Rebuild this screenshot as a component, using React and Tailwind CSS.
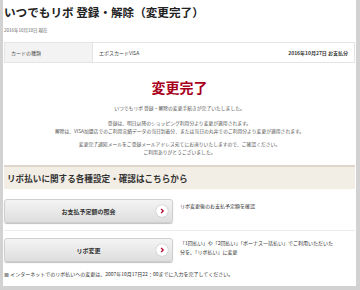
import React from 'react';

const jp = { fontFamily: '"Noto Sans CJK JP", "Noto Sans", sans-serif' };

const Chevron = () => (
  <span className="flex h-[12px] w-[12px] items-center justify-center rounded-full bg-white shadow-[0_0_1px_rgba(0,0,0,0.4)]">
    <svg width="6" height="6" viewBox="0 0 10 10">
      <path d="M3.5 1.5 L7 5 L3.5 8.5" fill="none" stroke="#b3002a" strokeWidth="2.2" />
    </svg>
  </span>
);

const MenuButton = ({ label }) => (
  <div className="relative flex h-[24px] w-[169px] shrink-0 items-center justify-center rounded-[3px] border border-[#cfcfcf] bg-gradient-to-b from-[#f4f4f4] to-[#dedede] shadow-[0_1px_1px_rgba(0,0,0,0.25)]">
    <span className="text-[6px] font-bold text-[#333]">{label}</span>
    <span className="absolute right-[4px] top-[5px]">
      <Chevron />
    </span>
  </div>
);

export default function App() {
  return (
    <div
      className="h-[290px] w-[360px] overflow-hidden border-b-[4px] border-l-[3px] border-r-[4px] border-[#d2d2d2] bg-white text-[#333]"
      style={jp}
    >
      <div className="flex flex-col px-[1px]">
        <h1 className="pt-[5px] text-[11.6px] font-bold leading-[15px] text-[#222]">
          いつでもリボ 登録・解除（変更完了）
        </h1>
        <p className="mt-[7px] text-[4.5px] leading-[6px] text-[#666]">2016年10月10日 現在</p>

        <div className="mt-[9px] flex h-[21px] border border-[#e4e4e4] text-[5px]">
          <div className="flex w-[88px] items-center border-r border-[#e4e4e4] bg-[#f3f3f3] pl-[6px] text-[#555]">
            カードの種類
          </div>
          <div className="flex flex-1 items-center justify-between pl-[6px] pr-[6px] text-[#444]">
            <span>エポスカードVISA</span>
            <span className="font-bold text-[#333]">2016年10月27日 お支払分</span>
          </div>
        </div>

        <h2 className="mt-[16px] text-center text-[14px] font-bold leading-[16px] text-[#a8001c]">
          変更完了
        </h2>

        <div className="mt-[9px] flex flex-col items-center text-center text-[4.8px] leading-[8px] text-[#555]">
          <p>いつでもリボ 登録・解除の変更手続きが完了いたしました。</p>
          <p className="mt-[7px]">登録は、明日以降のショッピング利用分より変更が適用されます。</p>
          <p>
            解除は、VISA加盟店でのご利用実績データの当日到着分、または当日の丸井でのご利用分より変更が適用されます。
          </p>
          <p className="mt-[5px]">
            変更完了通知メールをご登録メールアドレス宛てにお送りいたしますので、ご確認ください。
          </p>
          <p>ご利用ありがとうございました。</p>
        </div>

        <div className="mt-[9px] flex h-[24px] items-center border-t-[2px] border-[#ddd6ca] bg-[#f2ede5] pl-[3px] text-[8.6px] font-bold text-[#333]">
          リボ払いに関する各種設定・確認はこちらから
        </div>

        <div className="mt-[10px] flex items-start gap-[7px]">
          <MenuButton label="お支払予定額の照会" />
          <p className="pt-[3px] text-[5px] leading-[8px] text-[#333]">リボ変更後のお支払予定額を確認</p>
        </div>

        <div className="mt-[7px] border-t border-[#ececec]" />

        <div className="mt-[7px] flex items-start gap-[7px]">
          <MenuButton label="リボ変更" />
          <p className="pt-[0px] text-[5px] leading-[9px] text-[#333]">
            「1回払い」や「2回払い」「ボーナス一括払い」でご利用いただいた
            <br />
            分を、「リボ払い」に変更
          </p>
        </div>

        <p className="mt-[8px] text-[5px] leading-[8px] text-[#333]">
          <span className="text-[#999]">■</span> インターネットでのリボ払いへの変更は、2007年10月17日22：00までに入力を完了してください。
        </p>

        <div className="mt-[9px] border-t border-[#e6e6e6]" />
      </div>
    </div>
  );
}
